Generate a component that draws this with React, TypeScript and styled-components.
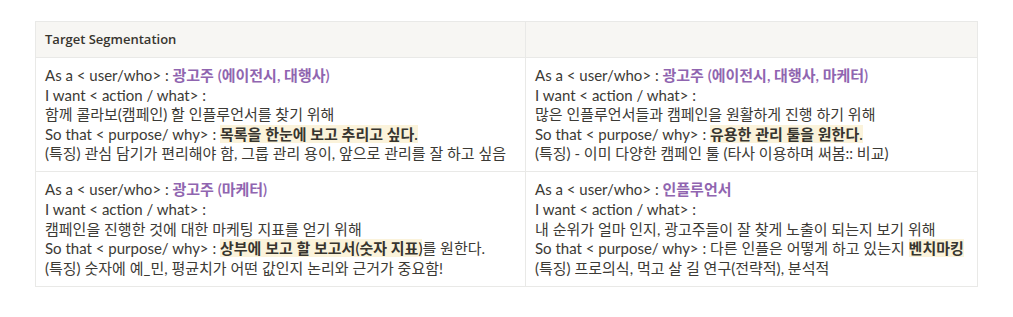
import React from "react";
import styled, { createGlobalStyle } from "styled-components";

const Global = createGlobalStyle`
  html, body { margin: 0; padding: 0; background: #ffffff; }
  body { font-family: "Open Sans", "Noto Sans CJK KR", sans-serif; }
`;

const Page = styled.div`
  padding: 21px 0 0 35px;
`;

const Table = styled.table`
  border-collapse: collapse;
  table-layout: fixed;
  width: 942px;
  font-family: "Lato", "Noto Sans CJK KR", sans-serif;
  font-size: 15px;
  line-height: 19.6px;
  color: #3c3a35;
`;

const HeadCell = styled.th`
  background: #f7f6f3;
  border: 1px solid #e9e9e7;
  height: 35px;
  padding: 0 9px;
  text-align: left;
  font-family: "Open Sans", "Noto Sans CJK KR", sans-serif;
  font-size: 13px;
  font-weight: 600;
  vertical-align: middle;
  color: #37352f;
`;

const Cell = styled.td`
  border: 1px solid #e9e9e7;
  padding: 8px 9px 7.5px;
  vertical-align: top;
  white-space: nowrap;
`;

const Line = styled.div``;

const Who = styled.span`
  color: #9065b0;
  font-weight: 600;
`;

const Mark = styled.span`
  background: #fbf3db;
  color: #37352f;
  font-weight: 600;
`;

type Row = {
  who: string;
  action: string;
  purpose: React.ReactNode;
  note: string;
};

const rows: Row[][] = [
  [
    {
      who: "광고주 (에이전시, 대행사)",
      action: "함께 콜라보(캠페인) 할 인플루언서를 찾기 위해",
      purpose: <Mark>목록을 한눈에 보고 추리고 싶다.</Mark>,
      note: "(특징) 관심 담기가 편리해야 함, 그룹 관리 용이, 앞으로 관리를 잘 하고 싶음",
    },
    {
      who: "광고주 (에이전시, 대행사, 마케터)",
      action: "많은 인플루언서들과 캠페인을 원활하게 진행 하기 위해",
      purpose: <Mark>유용한 관리 툴을 원한다.</Mark>,
      note: "(특징) - 이미 다양한 캠페인 툴 (타사 이용하며 써봄:: 비교)",
    },
  ],
  [
    {
      who: "광고주 (마케터)",
      action: "캠페인을 진행한 것에 대한 마케팅 지표를 얻기 위해",
      purpose: (
        <>
          <Mark>상부에 보고 할 보고서(숫자 지표)</Mark>를 원한다.
        </>
      ),
      note: "(특징) 숫자에 예_민, 평균치가 어떤 값인지 논리와 근거가 중요함!",
    },
    {
      who: "인플루언서",
      action: "내 순위가 얼마 인지, 광고주들이 잘 찾게 노출이 되는지 보기 위해",
      purpose: (
        <>
          다른 인플은 어떻게 하고 있는지 <Mark>벤치마킹</Mark>
        </>
      ),
      note: "(특징) 프로의식, 먹고 살 길 연구(전략적), 분석적",
    },
  ],
];

const Story: React.FC<{ r: Row }> = ({ r }) => (
  <Cell>
    <Line>
      As a &lt; user/who&gt; : <Who>{r.who}</Who>
    </Line>
    <Line>I want &lt; action / what&gt; :</Line>
    <Line>{r.action}</Line>
    <Line>So that &lt; purpose/ why&gt; : {r.purpose}</Line>
    <Line>{r.note}</Line>
  </Cell>
);

export default function App() {
  return (
    <Page>
      <Global />
      <Table>
        <colgroup>
          <col style={{ width: 490 }} />
          <col style={{ width: 452 }} />
        </colgroup>
        <thead>
          <tr>
            <HeadCell>Target Segmentation</HeadCell>
            <HeadCell />
          </tr>
        </thead>
        <tbody>
          {rows.map((row, i) => (
            <tr key={i}>
              {row.map((r, j) => (
                <Story key={j} r={r} />
              ))}
            </tr>
          ))}
        </tbody>
      </Table>
    </Page>
  );
}
